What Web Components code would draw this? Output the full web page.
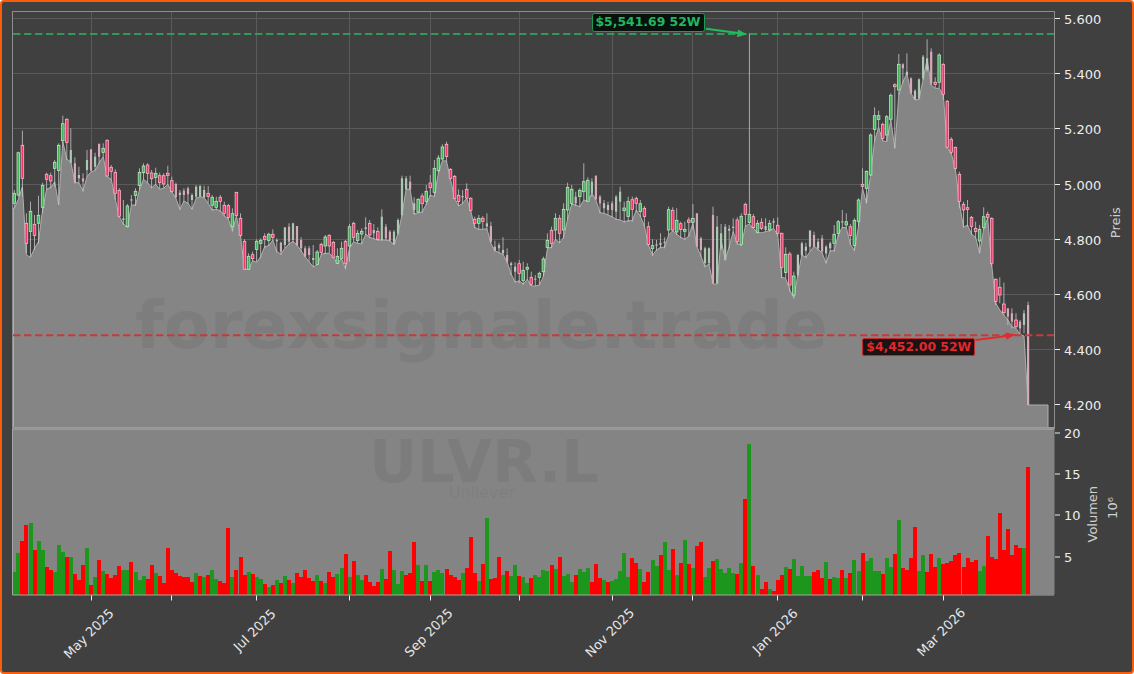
<!DOCTYPE html>
<html lang="de"><head><meta charset="utf-8"><title>ULVR.L</title>
<style>html,body{margin:0;padding:0;background:#fff}</style></head>
<body>
<chart-figure>
  <price-panel>
    <price-badge tone="up" style="left:589.5px;top:11.3px">$5,541.69 52W</price-badge>
    <price-badge tone="down" style="left:860.3px;top:335.7px">$4,452.00 52W</price-badge>
  </price-panel>
  <volume-panel></volume-panel>
  <date-axis></date-axis>
</chart-figure>
<script>
/* candles: type hi top bot lo line (y in 3x px) */
const C=`g 570 580 610 625 625;g 455 458 585 590 598;r 392 436 535 590 560;r 640 670 730 760 765;g 605 634 695 770 772;r 645 673 707 750 745;g 587 646 670 730 725;g 548 556 622 640 630;r 518 523 538 570 568;r 518 527 543 565 562;g 480 487 505 560 545;g 430 436 512 615 615;g 347 371 422 430 425;r 355 358 427 480 478;G 385 450 488 490 485;R 472 490 548 550 548;P 500 525 535 548 548;R 520 535 545 575 572;G 450 480 510 530 530;R 448 448 512 515 515;G 458 470 500 512 512;R 430 432 470 490 488;g 430 445 458 470 470;r 418 421 528 530 530;r 495 502 514 540 538;r 508 517 580 600 598;r 565 571 649 652 650;P 600 655 660 675 672;g 612 618 680 682 682;P 585 598 602 615 615;g 565 574 587 618 615;g 505 517 557 570 570;g 490 498 518 540 538;r 490 495 520 550 548;r 510 519 536 565 563;g 503 520 533 555 553;r 518 527 548 568 568;r 520 527 552 565 565;r 497 520 527 555 553;r 530 542 574 578 575;R 548 552 592 595 595;P 570 578 585 630 628;R 565 572 585 605 603;R 560 565 583 612 610;P 580 585 600 628 628;G 555 560 590 595 595;G 555 558 590 592 590;P 557 570 592 595 593;r 558 580 590 610 610;g 585 592 616 632 630;g 590 604 622 630 628;r 585 592 605 635 632;r 605 616 640 650 648;r 612 617 652 660 658;g 625 641 680 695 692;r 577 577 647 650 648;r 640 655 707 710 707;r 718 724 808 808 808;g 760 769 808 810 808;r 755 764 776 785 782;g 718 724 749 785 787;g 715 721 730 775 770;r 700 709 719 745 740;g 698 703 722 738 737;r 688 703 712 722 720;P 715 720 724 758 755;R 725 728 755 765 762;G 682 682 735 745 745;R 670 680 725 735 732;G 668 670 720 728 724;R 678 678 735 738 735;R 712 720 745 755 752;R 738 745 770 772 770;R 738 745 765 785 785;P 735 774 780 802 800;g 750 756 793 795 795;r 728 733 758 765 763;g 705 711 738 762 760;r 703 706 738 760 760;r 723 727 772 775 772;g 745 769 790 792 790;g 725 745 775 778 775;r 720 724 790 808 806;g 672 680 738 785 745;r 665 670 713 725 725;g 690 700 722 730 730;g 685 694 702 732 732;P 652 682 687 705 702;r 660 670 705 715 712;P 672 690 700 718 716;r 682 694 718 722 720;G 628 650 720 722 720;R 672 680 715 722 720;R 690 695 722 725 722;G 690 695 732 735 735;G 655 660 700 705 700;G 527 535 645 650 645;G 528 535 568 570 568;R 527 545 568 570 568;P 592 610 630 645 642;g 595 598 636 640 638;r 580 588 611 638 636;g 555 574 605 615 612;r 525 549 563 590 585;g 480 505 577 590 590;g 465 474 512 520 518;g 433 441 477 482 482;r 425 433 470 485 483;r 505 508 536 540 538;r 525 529 595 598 595;r 568 586 605 618 618;P 570 588 592 612 610;r 550 568 594 597 595;r 592 595 631 635 632;r 650 658 670 685 682;g 645 655 670 690 688;r 648 655 664 688 688;P 640 670 680 688 686;R 665 678 725 730 730;R 722 740 752 755 752;R 728 735 745 760 758;P 712 750 760 765 763;R 745 765 785 790 785;P 785 790 795 825 822;P 787 800 815 848 846;r 780 791 820 850 842;g 785 811 842 855 852;g 790 802 808 840 838;r 815 832 853 858 858;R 825 836 838 858 858;g 815 820 832 855 855;g 770 777 815 830 830;g 700 721 743 745 745;r 680 691 731 745 742;g 640 655 690 720 718;r 645 655 700 730 728;g 610 628 690 715 712;g 548 562 630 660 658;g 555 568 610 615 612;P 575 590 610 618 615;g 565 571 590 622 620;g 490 545 575 600 600;g 532 541 604 606 604;G 535 545 580 590 580;R 525 528 598 600 600;R 585 590 610 640 638;P 600 610 625 640 640;P 605 615 630 645 645;R 603 610 630 652 650;G 585 590 635 660 658;G 560 575 605 660 660;g 605 624 632 668 665;g 590 604 650 665 662;r 590 599 628 665 662;r 590 595 610 635 630;g 600 611 635 650 648;r 618 625 650 680 678;r 665 680 733 738 735;g 718 737 745 768 765;P 720 733 737 752 750;P 700 728 735 745 742;P 712 725 728 745 742;g 620 629 690 705 705;r 622 631 690 695 692;g 625 661 696 705 702;r 665 671 688 715 712;g 665 688 694 720 718;r 652 660 667 710 708;g 612 655 667 690 670;R 640 640 740 742 740;R 710 715 750 770 768;G 740 745 790 802 800;G 742 745 790 795 792;R 620 645 850 852 852;G 648 680 850 852 852;G 672 700 745 750 720;G 672 680 780 782 780;P 675 686 692 745 740;P 655 680 684 700 695;r 652 660 725 735 730;g 640 649 733 737 737;r 608 613 643 680 678;g 100 643 668 672 672;r 642 650 683 687 685;g 660 670 697 700 698;r 655 667 685 690 698;P 655 678 690 695 695;g 660 670 690 695 692;P 655 663 668 685 685;r 652 676 700 708 705;r 698 700 802 835 832;g 742 763 818 835 835;r 755 762 855 875 870;g 815 828 885 895 893;P 762 765 825 830 825;P 725 730 765 768 765;P 728 740 752 775 772;P 690 692 740 755 755;R 695 705 738 742 738;P 715 725 745 752 748;R 705 715 755 760 758;P 735 740 760 790 790;P 725 730 745 755 752;g 675 703 730 755 752;g 660 665 700 710 705;P 630 664 668 685 682;g 640 665 675 685 683;r 672 680 706 735 733;g 655 661 737 752 752;g 595 600 664 680 680;r 505 553 559 565 565;g 512 514 565 610 610;g 400 405 525 528 525;g 322 347 388 425 422;g 332 347 358 385 382;r 368 373 415 422 422;g 345 350 405 425 425;g 280 286 358 362 360;r 250 254 260 445 445;g 162 193 270 285 285;R 190 193 205 250 245;P 160 215 225 225 220;R 232 235 280 282 280;P 268 272 298 300 300;G 235 238 295 298 298;G 165 170 235 240 238;P 118 175 210 215 178;R 145 155 250 255 255;r 232 247 254 265 265;g 160 165 247 265 265;r 190 193 283 300 285;r 300 304 442 445 442;r 412 418 457 462 460;r 440 442 505 510 508;r 515 523 604 625 610;r 605 613 630 682 682;r 600 623 628 680 675;r 648 652 680 705 702;r 665 685 695 715 712;g 675 688 723 760 760;g 622 650 683 690 688;r 635 643 652 660 655;r 652 655 790 800 795;r 835 838 905 915 910;r 832 862 885 910 930;r 848 912 938 945 945;R 925 925 950 975 960;R 925 940 965 985 980;r 940 960 980 985 985;R 960 965 985 1002 1003;G 930 940 975 1000 1008;R 905 915 1215 1215 1215`.split(';').map(s=>{const a=s.trim().split(' ');return{t:a[0],hi:+a[1]/3,top:+a[2]/3,bot:+a[3]/3,lo:+a[4]/3,ln:+a[5]/3}});
const X=i=>14.3+i*4.039;
/* volumes: top y in px */
const V1='g513 g457 r420 r372 g366 r447 g420 g447 r498 r507 g513 g432 g453 r468 g468 r519 r537 r492 g441 r552 g528 r477 g510 r519 r533 r522 r495 g507 g507 r483 g513 g537 g525 r534 r492 g516 r525 r546 r441 r507 r516 r525 r528 r528 r543 g516 r525 g528 r522 g507 g534 r540 r546 r381 g528 r507 r468 r522 g513 r519 g528 g534 r549 g558 r552 g537 r546 g525 r537 g546 r516 r528 r507 r531 r540 g522 r540 g546 r513 r528 g519 g501 r459 g528 r480 g522 g537 r522 r543 r555 r543 g504 r534 r450 g507 g549 g510 r522 r516 r423 g492 r540 g492 r540 g513 g507 g516 r504 r522 r528 r537 g516 r501 r408 r516 g540 r489 g351 r534 r531 r468 g522 r510 g525 g492 r525 g528 g546 r531 g522 g528 g507 g510 r492 g504 r468 g525 g519 g543 r522 g504 g513 g501 r543 r489 r531 g537 r543 g540 g534 g510 g456 g528 r471 r486 g504 r543 r513 g477 g495 r462 g423 g507 r444 g522 r486 g417 r489 g501 r435 r423 g528 g501 r480 g474 g504 g516 g501 g516 r519 g486 r294 g129 r495 g522';
const V2='r865 r843 g865 r870 r838 r822 g798 r804 g774 g825 g795 g825 g825 r813 r807 r831 g783 r834 g828 g831 r807 g831 r816 g777 g810 r756 g780 g771 g810 g810 r819 g771 g798 r759 g657 r801 r807 r771 r678 g810 g762 r813 r759 r798 g771 r789 r786 r780 r762 r756 r798 r771 r783 r777 g810 g795 r705 r768 r774 r636 r747 r684 r762 r732 r741 g741 r498';
const VOL=[...V1.split(' ').map(s=>({c:s[0],y:400+ +s.slice(1)/3})),...V2.split(' ').map(s=>({c:s[0],y:300+ +s.slice(1)/3}))];
const GX=[91,171,256,349,430,519,612,692,777,862,943];
const FONT="'DejaVu Sans',sans-serif";

class ChartFigure extends HTMLElement{constructor(){super();this.attachShadow({mode:'open'}).innerHTML=`<style>
:host{display:flex;flex-direction:column;box-sizing:border-box;width:1134px;height:674px;background:#404040;border:2px solid #f95d0c;border-radius:4px;overflow:hidden}
</style><slot></slot>`}}

class PricePanel extends HTMLElement{constructor(){super();
const ys=[[5600,18],[5400,73],[5200,128],[5000,184],[4800,239],[4600,294],[4400,349],[4200,404]];
let grid='';
for(const [,y] of ys.slice(0,7))grid+=`<path d="M13 ${y+.5}H1054"/>`;
for(const x of GX)grid+=`<path d="M${x+.5} 12V428"/>`;
let pts=C.map((c,i)=>`${X(i).toFixed(1)},${c.ln.toFixed(1)}`).join(' ');
const area=`13.5,428 13.5,208 ${pts} 1048,405 1048,428`;
let wicks='',bodies='';
const col={g:['#3fb45a','#c4e6c7'],r:['#f1386a','#f7bccb'],G:'#abc6b1',R:'#d4aab9',P:'#bcc4bd'};
C.forEach((c,i)=>{const x=X(i);
wicks+=`<path d="M${x.toFixed(1)} ${c.hi.toFixed(1)}V${c.lo.toFixed(1)}"/>`;
const h=Math.max(c.bot-c.top,1.2);
if(c.t==='g'||c.t==='r')bodies+=`<rect x="${(x-1.3).toFixed(1)}" y="${c.top.toFixed(1)}" width="2.6" height="${h.toFixed(1)}" fill="${col[c.t][0]}" stroke="${col[c.t][1]}" stroke-width=".75"/>`;
else bodies+=`<rect x="${(x-1.1).toFixed(1)}" y="${c.top.toFixed(1)}" width="2.2" height="${h.toFixed(1)}" fill="${col[c.t]}"/>`;
});
let ticks='';
for(const [v,y] of ys){const s=(v/1000).toFixed(3);
ticks+=`<path d="M1055 ${y+.5}h5" stroke="#ececec"/><text x="1064" y="${y+5.5}" class="t">${s}</text>`}
this.attachShadow({mode:'open'}).innerHTML=`<style>
:host{display:block;position:relative;flex:none;height:426.5px}
svg{display:block;position:absolute;left:0;top:0}
.grid path{stroke:#5a5a5a;fill:none}
.t{font:13px ${FONT};fill:#ededed}
.wm{font-family:${FONT};font-weight:700;fill:#000;fill-opacity:.06}
.w path{stroke:#c6c6c6;stroke-width:.8;fill:none}
</style>
<svg width="1130" height="426.5" viewBox="2 2 1130 426.5">
<g class="grid">${grid}</g>
<rect x="12.5" y="11.5" width="1042" height="417" fill="none" stroke="#8d8d8d"/>
<polygon points="${area}" fill="#858585" stroke="none"/>
<polyline points="13.5,428 13.5,208 ${pts} 1048,405 1048,428" fill="none" stroke="#aeaeae" stroke-width="1"/>
<path d="M13 427.7H1054" stroke="#9c9c9c" stroke-width="1.6"/>
<text class="wm" x="481.5" y="348" text-anchor="middle" font-size="66.5">forexsignale.trade</text>
<g class="w">${wicks}</g>
${bodies}
<path d="M13 34H1054" stroke="#33a15d" stroke-width="2" stroke-dasharray="7.4 3.6" opacity=".9"/>
<path d="M13 335.2H1054" stroke="#c73a3c" stroke-width="2" stroke-dasharray="7.4 3.6"/>
<path d="M706 28.8L738 33" stroke="#22bb5f" stroke-width="2"/><path d="M746.8 34.2L737 37.2L738 29.6Z" fill="#22bb5f"/>
<path d="M975.5 340L1007 336" stroke="#e32b2d" stroke-width="2"/><path d="M1015.5 334.6L1006.5 339.7L1005.6 332.4Z" fill="#e32b2d"/>
${ticks}
<text class="t" style="fill:#cfcfcf" text-anchor="middle" transform="translate(1119.5 222.7) rotate(-90)">Preis</text>
</svg><slot></slot>`}}

class PriceBadge extends HTMLElement{constructor(){super();this.attachShadow({mode:'open'}).innerHTML=`<style>
:host{position:absolute;display:block;box-sizing:border-box;height:18.6px;padding:0 3px;border-radius:2.5px;border:1.8px solid;font:700 12.4px/15px ${FONT};white-space:nowrap}
:host([tone=up]){background:#07120c;border-color:#1e9c55;color:#24b561}
:host([tone=down]){background:#1b1214;border-color:#c22a2c;color:#e3282b;box-shadow:0 0 1px #d33}
</style><slot></slot>`}}

class VolumePanel extends HTMLElement{constructor(){super();
let bars='';
VOL.forEach((v,i)=>{const l=Math.max(13,X(i)-2.0);const r=X(i)+2.0;
bars+=`<rect x="${l.toFixed(1)}" y="${v.y.toFixed(1)}" width="${(r-l).toFixed(1)}" height="${(594-v.y).toFixed(1)}" fill="${v.c==='g'?'#1c961c':'#ff0000'}"/>`});
let ticks='';
[[20,432],[15,473],[10,514],[5,556]].forEach(([v,y])=>{ticks+=`<path d="M1055 ${y+.5}h5" stroke="#ececec"/><text x="1064" y="${y+5.5}" class="t">${v}</text>`});
for(const x of GX)ticks+=`<path d="M${x+.5} 595v5" stroke="#ececec"/>`;
this.attachShadow({mode:'open'}).innerHTML=`<style>
:host{display:block;flex:none;height:171.5px}
svg{display:block;overflow:visible}
.t{font:13px ${FONT};fill:#ededed}
.wm{font-family:${FONT};fill:#000;fill-opacity:.06}
</style>
<svg width="1130" height="171.5" viewBox="2 428.5 1130 171.5">
<rect x="12.5" y="428" width="1042" height="166" fill="#848484"/>
<path d="M13 429H1054" stroke="#9c9c9c" stroke-width="1"/>
<text class="wm" x="484" y="481.7" text-anchor="middle" font-size="59" font-weight="700">ULVR.L</text>
<text class="wm" x="482" y="497" text-anchor="middle" font-size="15.9">Unilever</text>
<g shape-rendering="crispEdges">${bars}</g>
<path d="M12.5 428V594.5H1054" stroke="#a6a6a6" fill="none"/>
${ticks}
<text class="t" style="fill:#cfcfcf" text-anchor="middle" transform="translate(1097 513.7) rotate(-90)">Volumen</text>
<text class="t" style="fill:#cfcfcf" text-anchor="middle" transform="translate(1116.5 507.5) rotate(-90)">10⁶</text>
</svg>`}}

class DateAxis extends HTMLElement{constructor(){super();
let t='';
[['May 2025',88.5,633.5],['Jul 2025',254.5,630],['Sep 2025',428.5,632.5],['Nov 2025',609.6,632.5],['Jan 2026',775,631],['Mar 2026',941,632]].forEach(([s,x,y])=>{
t+=`<text x="0" y="4.7" text-anchor="middle" transform="translate(${x} ${y}) rotate(-45)" font-size="13" fill="#e6e6e6">${s}</text>`});
this.attachShadow({mode:'open'}).innerHTML=`<style>
:host{display:block;flex:1 1 auto;font-family:${FONT}}
svg{display:block}
</style><svg width="1130" height="72" viewBox="2 600 1130 72">${t}</svg>`}}

customElements.define('chart-figure',ChartFigure);
customElements.define('price-panel',PricePanel);
customElements.define('price-badge',PriceBadge);
customElements.define('volume-panel',VolumePanel);
customElements.define('date-axis',DateAxis);
</script>
</body></html>
